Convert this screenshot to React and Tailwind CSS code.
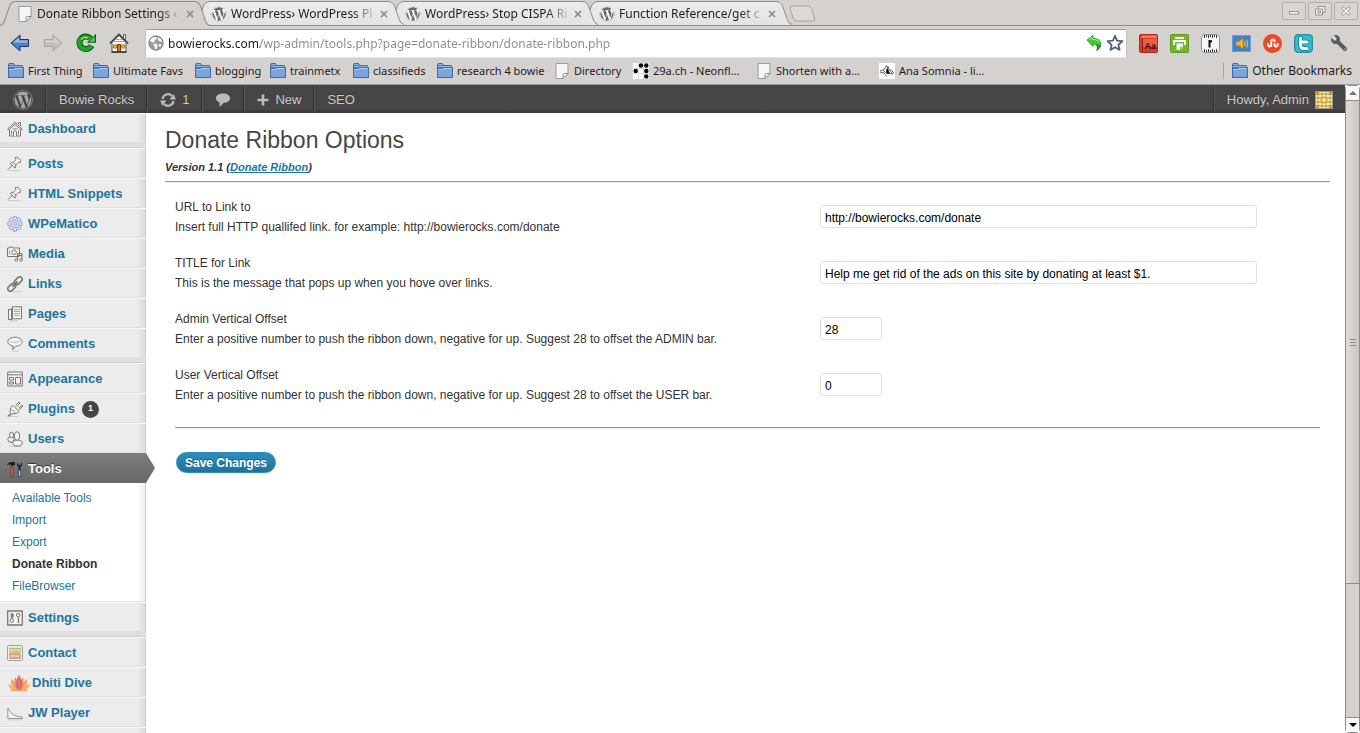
import React from "react";
import { FaWordpress, FaStumbleupon, FaWrench } from "react-icons/fa";

/* ---------- small drawings ---------- */

const PageIcon = () => (
  <svg viewBox="0 0 16 16" className="size-4 shrink-0">
    <path d="M2 .5h12v10l-5 5H2z" fill="#f6f6f6" stroke="#9b9b9b" />
    <path d="M14 10.500l-5 5v-3.500q0-1.500 1.500-1.500z" fill="#fff" stroke="#8a8a8a" />
  </svg>
);

const FolderIcon = () => (
  <svg viewBox="0 0 16 16" className="size-4 shrink-0">
    <path d="M.5 14.500v-13q0-1 1-1h4l1.500 2h7.500v2h1v10z" fill="#4f82bf" stroke="#3f6da6" />
    <path d="M1 3.500h13.500M1.500 1.500h4" stroke="#8fb4e0" />
    <path d="M.5 5.500h4.500l1.500-1h9v10H.5z" fill="#7ba5da" stroke="#3f6da6" />
    <path d="M1.500 6.500h4l1.500-1h7.500" fill="none" stroke="#b3cef0" />
  </svg>
);

const DotsIcon = () => (
  <svg viewBox="0 0 16 16" className="size-4 shrink-0">
    <rect width="16" height="16" fill="#fff" />
    <path d="M5.500 0v16M10.500 0v16M0 5.500h16M0 10.500h16" stroke="#ddd" />
    <circle cx="8" cy="2.500" r="2.200" />
    <circle cx="13.300" cy="2.500" r="2.200" />
    <circle cx="2.700" cy="8" r="2.200" />
    <circle cx="13.300" cy="8" r="2.200" />
    <circle cx="13.300" cy="13.400" r="2.200" />
  </svg>
);

const SketchIcon = () => (
  <svg viewBox="0 0 16 16" className="size-4 shrink-0">
    <rect width="16" height="16" fill="#fff" />
    <path d="M1 8l4-1.500 2.500-4L10 6l2.500 1.500L15 10M1 9l4 1 3 3.500M4 7.500l4 3M9 3v8M10.500 7l3.500 4-4-.5" fill="none" stroke="#444" strokeWidth=".8" />
    <path d="M8 4.500l3 6-3 .5-1-3z" fill="#111" />
  </svg>
);

const BackIcon = () => (
  <svg viewBox="0 0 20 18" className="h-[18px] w-5">
    <path d="M1 9l9-8v4.500h8.500v7H10V17z" fill="#4f7fc4" stroke="#1d3668" strokeLinejoin="round" />
    <path d="M3 8.500l6-5v3h8.500v2z" fill="#9dbde6" />
  </svg>
);

const ForwardIcon = () => (
  <svg viewBox="0 0 20 18" className="h-[18px] w-5">
    <path d="M19 9l-9-8v4.500H1.500v7H10V17z" fill="#c2c0bd" stroke="#a6a3a0" strokeLinejoin="round" />
    <path d="M17 8.500l-6-5v3H2.500v2z" fill="#d3d1ce" />
  </svg>
);

const ReloadIcon = () => (
  <svg viewBox="0 0 20 20" className="size-5">
    <path d="M15.500 12.500a6.300 6.300 0 1 1-1-7" fill="none" stroke="#0b5a10" strokeWidth="6" />
    <path d="M20 .8v9h-9.200z" fill="#0b5a10" />
    <path d="M15.300 12.700a6.300 6.300 0 1 1-1-7" fill="none" stroke="#20a32a" strokeWidth="4" />
    <path d="M18.900 3v5.800h-6z" fill="#4cc94f" />
    <path d="M5 6.500a6.300 6.300 0 0 1 7-1.800" fill="none" stroke="#8be08b" strokeWidth="1.500" />
  </svg>
);

const HomeIcon = () => (
  <svg viewBox="0 0 20 20" className="size-5">
    <path d="M14.500 1.500h2v5h-2z" fill="#eee" stroke="#444" strokeWidth=".8" />
    <path d="M3 9.500l7-7 7 7v9.500H3z" fill="#fbfaf6" stroke="#5a5145" />
    <path d="M.8 10.500L10 1.300l9.200 9.200" fill="none" stroke="#3a3a3a" strokeWidth="1.500" />
    <path d="M4.500 8.500h11M6.500 6.500h7" stroke="#aaa" />
    <path d="M8.500 11.500h3V19h-3z" fill="#d97a1c" stroke="#6d3b0c" />
    <path d="M4.500 12h3v3h-3zM12.800 12h3v3h-3z" fill="#f4cf5e" stroke="#b0721c" />
    <path d="M2.500 19h15" stroke="#333" strokeWidth="1.500" />
  </svg>
);

const GlobeIcon = () => (
  <svg viewBox="0 0 16 16" className="size-4 shrink-0">
    <circle cx="8" cy="8" r="7.200" fill="#9a9a9a" stroke="#808080" />
    <path d="M3 3.500q2.500-2 5-1.800L9 4 6.500 5 7 7l-2.500.5L2 6q0-1.500 1-2.500zM9.500 2l3.500 2 1 3-2.500-.5L10 5zM5 9l3-.5L10 10l-1.500 4-1.500.3-.5-2.800zM11 9l2.500.3-1 2.700-1.500-.5z" fill="#f4f4f4" />
  </svg>
);

const UndoIcon = () => (
  <svg viewBox="0 0 16 16" className="size-4 shrink-0">
    <path d="M1 5l6-4.500v3c6-.5 8.500 3.500 7.500 7.500-.5 2-2 4-4 4.500 2-3.500.5-6.500-3.500-6.500v2.500z" fill="#3fc92f" stroke="#1f8a1a" strokeWidth=".8" strokeLinejoin="round" />
    <path d="M8 9q4 .5 3 6 3-1.500 3.500-5" fill="#23702a" opacity=".7" />
    <path d="M3 4.800L6.200 2.300v2c4 0 6 1 7 3.200" fill="none" stroke="#a4f094" />
  </svg>
);

const StarIcon = () => (
  <svg viewBox="0 0 18 18" className="size-[18px] shrink-0">
    <path d="M9 1.800l2.100 4.900 5.300.5-4 3.500 1.200 5.200L9 13.200l-4.600 2.700 1.200-5.200-4-3.500 5.300-.5z" fill="#fff" stroke="#566079" strokeWidth="1.800" strokeLinejoin="round" />
  </svg>
);

const DictionaryIcon = () => (
  <svg viewBox="0 0 19 19" className="size-[19px]">
    <rect x=".5" y=".5" width="18" height="18" rx="1.500" fill="#d6402f" stroke="#b02a1c" />
    <path d="M2 4h16V1.500H3.500z" fill="#f47a62" />
    <path d="M4 5h14v13H4z" fill="#e8604b" />
    <path d="M3.500 4.500V18" stroke="#8f1a10" />
    <path d="M4 13h14v5H4z" fill="#d23d2d" />
    <text x="5.500" y="14.500" fontSize="9" fontWeight="700" fill="#3d0a06" fontFamily="Liberation Sans, sans-serif">Aa</text>
  </svg>
);

const PrintIcon = () => (
  <svg viewBox="0 0 19 19" className="size-[19px]">
    <rect x=".5" y=".5" width="18" height="18" rx="1" fill="#73b52c" stroke="#5e9b1d" />
    <path d="M5 4h9M4 11V7h11v4" fill="none" stroke="#fff" strokeWidth="1.800" />
    <path d="M6.500 9.500h6.500V13L10.500 16h-4z" fill="#fff" />
    <path d="M10.500 16v-3H13" fill="none" stroke="#73b52c" />
  </svg>
);

const RulerIcon = () => (
  <svg viewBox="0 0 19 19" className="size-[19px]">
    <rect x=".5" y=".5" width="18" height="18" rx="3" fill="#f5f7f9" stroke="#8d9298" />
    <path d="M3.500 1v3M5.500 1v2M7.500 1v3M9.500 1v2M11.500 1v3M13.500 1v2M15.500 1v3M3.500 15v3M5.500 16v2M7.500 15v3M9.500 16v2M11.500 15v3M13.500 16v2M15.500 15v3" stroke="#333" />
    <path d="M8.500 6v7.500M8.500 8.500q.5-1.500 2.500-1.300" fill="none" stroke="#111" strokeWidth="2" />
  </svg>
);

const SpeakerIcon = () => (
  <svg viewBox="0 0 19 19" className="size-[19px]">
    <rect x=".5" y="1.500" width="18" height="16" fill="#3f82c9" stroke="#6d9fd4" />
    <path d="M4 7.500h3L11 4v11l-4-3.500H4z" fill="#f8b334" stroke="#c98310" strokeWidth=".6" />
    <path d="M12.500 7q1.500 2.500 0 5M14.500 5.500q2.300 4 0 8" fill="none" stroke="#f8b334" strokeWidth="1.200" />
  </svg>
);

const StumbleIcon = () => (
  <span className="flex size-[19px] items-center justify-center rounded-full bg-[#ec4823]">
    <FaStumbleupon className="size-3 text-white" />
  </span>
);

const TwitterIcon = () => (
  <svg viewBox="0 0 19 19" className="size-[19px]">
    <rect x=".7" y=".7" width="17.600" height="17.600" rx="3.500" fill="#35bccb" stroke="#2b8f9b" strokeWidth="1.400" />
    <path d="M6.500 4.500v6.500q0 3.500 3.500 3.500h3M6.500 8H13" fill="none" stroke="#0f7f90" strokeWidth="4.600" strokeLinecap="round" />
    <path d="M6.500 4.500v6.500q0 3.500 3.500 3.500h3M6.500 8H13" fill="none" stroke="#fff" strokeWidth="3" strokeLinecap="round" />
  </svg>
);

const UpdateIcon = () => (
  <svg viewBox="0 0 16 16" className="size-4">
    <path d="M2.500 7a5.500 5.500 0 0 1 9.500-3M13.500 9a5.500 5.500 0 0 1-9.500 3" fill="none" stroke="#bbb" strokeWidth="2.200" />
    <path d="M9.500 7.500h6.300L13.800 2zM6.500 8.500H.2L2.200 14z" fill="#bbb" />
  </svg>
);

const BubbleIcon = () => (
  <svg viewBox="0 0 16 16" className="size-4">
    <path d="M8 1.500c4 0 7 2 7 4.700s-3 4.700-6.500 4.700L4.500 15v-4.700C2.300 9.500 1 8 1 6.200c0-2.700 3-4.700 7-4.700z" fill="#bbb" />
  </svg>
);

const PlusIcon = () => (
  <svg viewBox="0 0 12 12" className="size-3">
    <path d="M6 .5v11M.5 6h11" stroke="#bbb" strokeWidth="2.600" />
  </svg>
);

const AvatarIcon = () => (
  <svg viewBox="0 0 18 18" className="size-[18px]">
    <rect width="18" height="18" fill="#fff" stroke="#999" strokeWidth="2" />
    <path d="M3 1v16M7 1v16M11 1v16M15 1v16M1 3h16M1 7h16M1 11h16M1 15h16" stroke="#d6a21e" strokeWidth="1.300" />
    <path d="M1 1h3v3H1zM14 1h3v3h-3zM1 14h3v3H1zM14 14h3v3h-3z" fill="#cf9a14" />
    <path d="M9 5.500L12.500 9 9 12.500 5.500 9z" fill="#f3dfa2" stroke="#c48f10" />
  </svg>
);

function MenuGlyph({ children }) {
  return (
    <svg viewBox="0 0 16 16" className="size-4" fill="#f4f4f4" stroke="#777" strokeLinejoin="round">
      {children}
    </svg>
  );
}

const Pin = () => (
  <MenuGlyph>
    <path d="M1 14.500h13" stroke="#ccc" />
    <path d="M1 13.500L5.500 9" />
    <path d="M8 1.800q1.500-1.500 4 .6t1.500 4l-1.800-.3-3 3q.5 2-.7 3L3.200 7.200q1-1.200 3-.7l2.800-3z" />
    <path d="M6.500 7l2.500 2" />
  </MenuGlyph>
);

const menuIcons = {
  home: (
    <MenuGlyph>
      <path d="M2.500 7.500v7.500h11V7.500" />
      <path d="M.6 8L8 1.200 15.400 8l-1 1L8 3.300 1.600 9z" />
      <path d="M11.500 3V1.500h2V5M6.500 15v-4.500q1.500-1.500 3 0V15M4.500 9.500v4M11.500 9.500v4M5.500 8h5" />
    </MenuGlyph>
  ),
  pin: <Pin />,
  gear: (
    <MenuGlyph>
      <g stroke="#96a6cf" fill="#d6def2">
        <path d="M6.500.7h3l.4 1.800 1.700-1 2.300 2.200-1 1.800 2 .6v3.300l-2 .5 1 1.900-2.200 2.200-1.800-1-.5 2.200H6.500L6 13l-1.800 1L2 11.800l1-1.900-2.200-.5V6.100l2.200-.6-1-1.800L4.300 1.500l1.800 1z" />
        <circle cx="8" cy="8" r="4" fill="#eef2fb" />
        <circle cx="8" cy="8" r="1.800" />
      </g>
    </MenuGlyph>
  ),
  media: (
    <MenuGlyph>
      <path d="M.5 2h2V1h3v1h7v8.500H.5z" />
      <path d="M2.500 4v5" stroke="#aaa" />
      <circle cx="7" cy="6.200" r="2.300" />
      <path d="M10.500 14V7.500h4.500V14M10.500 9.500h4.500" fill="none" />
      <circle cx="9.300" cy="14" r="1.300" />
      <circle cx="14" cy="14" r="1.300" />
    </MenuGlyph>
  ),
  link: (
    <MenuGlyph>
      <path d="M2 15.500h13" stroke="#ccc" />
      <g fill="none">
        <rect x="6.800" y="2.200" width="9" height="5" rx="2.500" transform="rotate(-45 11.300 4.700)" strokeWidth="1.600" />
        <rect x=".2" y="8.800" width="9" height="5" rx="2.500" transform="rotate(-45 4.700 11.300)" strokeWidth="1.600" />
        <path d="M5.500 10.500l5-5" strokeWidth="2" />
      </g>
    </MenuGlyph>
  ),
  pages: (
    <MenuGlyph>
      <path d="M1.500 3.500H5v10H1.500zM4.500 14.500v-12h4" />
      <path d="M5.500.8h9v12h-9z" />
      <path d="M7 3.500h6M7 5.500h6M7 7.500h6M7 9.500h6" stroke="#aaa" />
      <path d="M2 15h9" stroke="#ccc" />
    </MenuGlyph>
  ),
  comments: (
    <MenuGlyph>
      <path d="M4 15h8" stroke="#ccc" />
      <path d="M8 1.200c4 0 7.200 2 7.200 4.500S12.500 10 9 10.200L5.500 13.500l.8-3.500C3 9.500.8 8 .8 5.700.8 3.200 4 1.200 8 1.200z" />
      <path d="M3 5q5 3 10 0" stroke="#d5d5d5" fill="none" strokeWidth="2" />
    </MenuGlyph>
  ),
  appearance: (
    <MenuGlyph>
      <path d="M.7 1h14.600v14H.7z" />
      <path d="M.7 3.800h14.600M2.500 6.500h4v2.500h-4zM2.500 11h4v2h-4zM8.500 6.500h5v6.500h-5z" />
    </MenuGlyph>
  ),
  plugins: (
    <MenuGlyph>
      <path d="M1 15.500h10" stroke="#ccc" />
      <path d="M.8 14.800q2.200.2 3.200-2.300" fill="none" strokeWidth="1.600" />
      <path d="M6 4.500l6 6q-2 2.500-5 2.200L4.500 13 3 11.500l.3-2.500Q3 6.500 6 4.500z" />
      <path d="M8.500 4.500L12 1l1 1-3.300 3.700M11.500 7.500L15 4l.8 1-3.500 3.800M5 8.500l3 3" />
    </MenuGlyph>
  ),
  users: (
    <MenuGlyph>
      <path d="M2 15.500h13" stroke="#ccc" />
      <ellipse cx="4" cy="8.500" rx="3.200" ry="2.800" />
      <ellipse cx="4.500" cy="4" rx="2" ry="2.800" />
      <ellipse cx="10.500" cy="12" rx="5" ry="3" />
      <ellipse cx="10" cy="5" rx="2.500" ry="4.200" />
    </MenuGlyph>
  ),
  tools: (
    <svg viewBox="0 0 16 16" className="size-4">
      <path d="M0 4.500Q1.500 1 4 1h4v3H6V5H4V3.500Q2 3 0 4.500z" fill="#1f1f1f" />
      <path d="M4 5h2v10.500H4z" fill="#d98a5a" stroke="#5a2f14" strokeWidth=".8" />
      <path d="M10 1.500v3L11.500 6v3h2V6L15 4.500v-3l-1.300 1.300V4h-2.400V2.800z" fill="#222" />
      <path d="M11.300 9h2.600v6.500h-2.600z" fill="#9fc4ea" stroke="#335" strokeWidth=".8" />
    </svg>
  ),
  settings: (
    <MenuGlyph>
      <path d="M.7 1h14.600v14H.7z" strokeWidth="1.300" />
      <path d="M4.500 3v5.500M11.500 7.500V13M6 3.500v4" fill="none" strokeWidth="1.400" />
      <circle cx="4.800" cy="10.500" r="1.800" />
      <circle cx="11.200" cy="5" r="1.800" />
    </MenuGlyph>
  ),
  contact: (
    <MenuGlyph>
      <rect x=".6" y=".6" width="14.800" height="14.800" rx="1" stroke="#999" />
      <path d="M3 3.500h10v3.500H3z" fill="#fff" stroke="#b4bb56" strokeWidth="1.300" />
      <path d="M3 9h10v4H3z" fill="#fbe9e3" stroke="#d9826b" strokeWidth="1.300" />
      <path d="M5 5.200h6M5 11h6" stroke="#aaa" />
    </MenuGlyph>
  ),
  lotus: (
    <svg viewBox="0 0 24 18" className="h-[18px] w-6 shrink-0">
      <path d="M1 10q4 0 8 6.500-6 1-8-6.500zM23 10q-4 0-8 6.500 6 1 8-6.500z" fill="#f4b56a" />
      <path d="M4 5q5 2 6 11.500Q3 13 4 5zM20 5q-5 2-6 11.500Q21 13 20 5z" fill="#f0a95e" />
      <path d="M8 3q4 4 3 13.500Q6 12 8 3zM16 3q-4 4-3 13.500Q18 12 16 3z" fill="#e98f6c" />
      <path d="M12 1q4.500 6 2 15.500h-4Q7.500 7 12 1z" fill="#d9666c" />
      <path d="M12 1v15.500" stroke="#e98a88" />
      <path d="M4 16.500h16" stroke="#eeaa5c" strokeWidth="1.500" />
    </svg>
  ),
  jw: (
    <MenuGlyph>
      <path d="M.8 3v10.500h14.500V12Q5 12 .8 3z" fill="#f1f1f1" stroke="#999" />
      <path d="M1 14.800h14.500" stroke="#ccc" />
    </MenuGlyph>
  ),
};

/* ---------- browser frame ---------- */

function Tab({ title, active, icon, order }) {
  const fill = active ? "#d5d1ce" : "#e9e7e5";
  return (
    <div
      className={
        "relative -mr-4 flex w-[210px] items-stretch " +
        (active ? "-mb-px h-[25px] " : "h-6 ") +
        order
      }
    >
      <svg viewBox="0 0 16 24" preserveAspectRatio="none" className="h-full w-4 shrink-0">
        <path d="M0 24Q3 23 4.500 19L9.500 5Q11 .5 16 .5V24z" fill={fill} />
        <path d="M0 23.500Q3 23 4.500 19L9.500 5Q11 .5 16 .5" fill="none" stroke="#8f8c89" />
      </svg>
      <div
        className={
          "flex min-w-0 flex-1 items-center border-t border-[#8f8c89] pl-px " +
          (active ? "bg-[#d5d1ce]" : "bg-linear-to-b from-[#efedec] to-[#e4e2e0]")
        }
      >
        {icon}
        <a
          href="#"
          className="ml-1 min-w-0 flex-1 whitespace-nowrap text-[#1c1c1c] [mask-image:linear-gradient(to_right,black_82%,transparent)]"
        >
          {title}
        </a>
        <button type="button" aria-label={"Close " + title} className="ml-0.5 flex h-4 w-2 items-center justify-center">
          <svg viewBox="0 0 8 8" className="size-2">
            <path d="M1 1l6 6M7 1L1 7" stroke="#8c8986" strokeWidth="1.600" />
          </svg>
        </button>
      </div>
      <svg viewBox="0 0 16 24" preserveAspectRatio="none" className="h-full w-4 shrink-0">
        <path d="M16 24Q13 23 11.500 19L6.500 5Q5 .5 0 .5V24z" fill={fill} />
        <path d="M16 23.500Q13 23 11.500 19L6.500 5Q5 .5 0 .5" fill="none" stroke="#8f8c89" />
      </svg>
    </div>
  );
}

const WpFavicon = () => <FaWordpress className="size-4 shrink-0 rounded-full bg-white text-[#6a6a6a]" />;

function WindowButton({ label, children }) {
  return (
    <button
      type="button"
      aria-label={label}
      className="flex h-[18px] w-6 items-center justify-center rounded-xs border border-[#b3afab] bg-[#d8d5d2]"
    >
      <svg viewBox="0 0 12 12" className="size-3" fill="none" stroke="#96928e">
        {children}
      </svg>
    </button>
  );
}

function TabStrip() {
  return (
    <div className="flex h-[26px] shrink-0 items-end justify-between border-b border-[#8f8c89] bg-[#d5d1ce]">
      <div className="flex items-end">
        <Tab active order="z-40" icon={<PageIcon />} title="Donate Ribbon Settings ‹" />
        <Tab order="z-30" icon={<WpFavicon />} title="WordPress› WordPress Pl" />
        <Tab order="z-20" icon={<WpFavicon />} title="WordPress› Stop CISPA Ri" />
        <Tab order="z-10" icon={<WpFavicon />} title="Function Reference/get c" />
        <button type="button" aria-label="New tab" className="mb-[3px] ml-3">
          <svg viewBox="0 0 28 17" className="h-[17px] w-7">
            <path d="M4 1h16q2.500 0 3.500 2.500L26.500 13q.8 3-2 3H9q-2.500 0-3.500-2.500L2 4Q1 1 4 1z" fill="#dcd9d7" stroke="#a5a19e" />
          </svg>
        </button>
      </div>
      <div className="mr-0.5 mb-[5px] flex gap-0.5">
        <WindowButton label="Minimize">
          <rect x="1.500" y="6.500" width="9" height="2.500" fill="#fff" />
        </WindowButton>
        <WindowButton label="Restore">
          <path d="M4 1.500h7v6H8.500V10h-7V4H4zM4 4h4.500v3.500M4 6h2.500v2H4z" fill="#eee" />
        </WindowButton>
        <WindowButton label="Close window">
          <path d="M1.500 3L3 1.500l3 3 3-3L10.500 3l-3 3 3 3L9 10.500l-3-3-3 3L1.500 9l3-3z" fill="#fff" />
        </WindowButton>
      </div>
    </div>
  );
}

function Toolbar() {
  const extensions = [
    ["Dictionary", <DictionaryIcon />],
    ["Print", <PrintIcon />],
    ["Ruler", <RulerIcon />],
    ["Speak", <SpeakerIcon />],
    ["StumbleUpon", <StumbleIcon />],
    ["Twitter", <TwitterIcon />],
  ];
  return (
    <div className="flex h-[34px] shrink-0 items-center bg-[#d5d1ce] pr-[13px] pl-2.5">
      <div className="flex w-[136px] shrink-0 items-center gap-[13px]">
        <button type="button" aria-label="Back"><BackIcon /></button>
        <button type="button" aria-label="Forward"><ForwardIcon /></button>
        <button type="button" aria-label="Reload"><ReloadIcon /></button>
        <button type="button" aria-label="Home"><HomeIcon /></button>
      </div>
      <div className="-ml-px flex h-[29px] min-w-0 flex-1 items-center gap-1 rounded-xs border border-t-[#a09c99] border-r-[#c5c1be] border-b-[#e4e2e0] border-l-[#c5c1be] bg-white px-0.5">
        <GlobeIcon />
        <input
          type="text"
          aria-label="Address"
          defaultValue="bowierocks.com/wp-admin/tools.php?page=donate-ribbon/donate-ribbon.php"
          className="min-w-0 flex-1 bg-[linear-gradient(90deg,#1c1c1c_92px,#8a8a8a_92px)] bg-clip-text pt-0.5 font-['Noto_Sans',sans-serif] text-xs text-transparent outline-none"
        />
        <button type="button" aria-label="Undo"><UndoIcon /></button>
        <button type="button" aria-label="Bookmark this page"><StarIcon /></button>
      </div>
      <div className="ml-3 flex shrink-0 items-center gap-3">
        {extensions.map(([label, icon]) => (
          <button key={label} type="button" aria-label={label} className="flex">{icon}</button>
        ))}
        <button type="button" aria-label="Browser menu" className="ml-1.5 flex">
          <FaWrench className="size-4 -scale-x-100 text-[#5a5a5a]" />
        </button>
      </div>
    </div>
  );
}

function BookmarksBar() {
  const items = [
    ["First Thing", <FolderIcon />, "w-[85px]"],
    ["Ultimate Favs", <FolderIcon />, "w-[102px]"],
    ["blogging", <FolderIcon />, "w-[75px]"],
    ["trainmetx", <FolderIcon />, "w-[83px]"],
    ["classifieds", <FolderIcon />, "w-[84px]"],
    ["research 4 bowie", <FolderIcon />, "w-[117px]"],
    ["Directory", <PageIcon />, "w-[79px]"],
    ["29a.ch - Neonfl…", <DotsIcon />, "w-[123px]"],
    ["Shorten with a…", <PageIcon />, "w-[123px]"],
    ["Ana Somnia - li…", <SketchIcon />, "w-[123px]"],
  ];
  return (
    <nav aria-label="Bookmarks" className="flex h-[25px] shrink-0 items-center justify-between border-b border-[#9e9a97] bg-[#d5d1ce] px-2 pb-0.5 text-[11px] text-[#1c1c1c]">
      <div className="flex">
        {items.map(([label, icon, width]) => (
          <a key={label} href="#" className={"flex items-center gap-1 whitespace-nowrap " + width}>
            {icon}
            {label}
          </a>
        ))}
      </div>
      <a href="#" className="flex items-center gap-1 border-l border-[#aaa6a3] pl-2 text-xs whitespace-nowrap">
        <FolderIcon />
        Other Bookmarks
      </a>
    </nav>
  );
}

function Scrollbar() {
  return (
    <div className="flex w-[15px] shrink-0 flex-col rounded-sm border border-[#8f8c89] bg-[#d5d1ce]">
      <button type="button" aria-label="Scroll up" className="flex h-[15px] items-center justify-center border-b border-[#8f8c89] bg-[#faf8f6]">
        <svg viewBox="0 0 8 4" className="h-1 w-2"><path d="M0 4l4-4 4 4z" fill="#777" /></svg>
      </button>
      <div className="flex flex-[484] flex-col items-center justify-center gap-0.5 border-b border-[#8f8c89] bg-linear-to-r from-[#dedbd8] to-[#cbc7c4]">
        <span className="h-px w-1.5 bg-[#8f8c89]" />
        <span className="h-px w-1.5 bg-[#8f8c89]" />
        <span className="h-px w-1.5 bg-[#8f8c89]" />
      </div>
      <div className="flex-[133]" />
      <button type="button" aria-label="Scroll down" className="flex h-[15px] items-center justify-center border-t border-[#8f8c89] bg-[#faf8f6]">
        <svg viewBox="0 0 8 4" className="h-1 w-2"><path d="M0 0l4 4 4-4z" /></svg>
      </button>
    </div>
  );
}

/* ---------- WordPress admin ---------- */

function BarItem({ className, children, label }) {
  return (
    <a
      href="#"
      aria-label={label}
      className={"mr-px flex h-full items-center border-r border-[#333] pt-0.5 shadow-[1px_0_0_#555] [text-shadow:0_-1px_0_#333] " + className}
    >
      {children}
    </a>
  );
}

function AdminBar() {
  return (
    <div className="flex h-7 shrink-0 items-center justify-between bg-linear-to-b from-[#464646] from-85% to-[#373737] text-[13px] text-[#ccc]">
      <div className="flex h-full">
        <BarItem label="About WordPress" className="w-[46px] justify-center">
          <FaWordpress className="size-5 text-[#aaa]" />
        </BarItem>
        <BarItem className="px-3">Bowie Rocks</BarItem>
        <BarItem className="gap-1.5 px-3">
          <UpdateIcon />1
        </BarItem>
        <BarItem label="Comments" className="px-3">
          <BubbleIcon />
        </BarItem>
        <BarItem className="gap-1.5 px-3">
          <PlusIcon />
          New
        </BarItem>
        <a href="#" className="flex h-full items-center px-3 pt-0.5 [text-shadow:0_-1px_0_#333]">SEO</a>
      </div>
      <a href="#" className="flex h-full items-center gap-1.5 border-l border-[#555] px-3 pt-0.5 shadow-[-1px_0_0_#333] [text-shadow:0_-1px_0_#333]">
        Howdy, Admin
        <AvatarIcon />
      </a>
    </div>
  );
}

function MenuItem({ icon, label, badge, current }) {
  const wide = icon === "lotus";
  return (
    <li
      className={
        "relative h-[30px] border-t border-b " +
        (current
          ? "border-t-[#808080] border-b-[#6d6d6d] bg-linear-to-b from-[#7d7d7d] to-[#686868]"
          : "border-t-[#f9f9f9] border-b-[#dfdfdf]")
      }
    >
      <a
        href="#"
        className={
          "flex h-full items-center gap-[5px] pt-0.5 pl-[7px] text-[13px] font-bold " +
          (current ? "text-white [text-shadow:0_-1px_0_#333]" : "text-[#21759b]")
        }
      >
        <span className={wide ? "flex w-5" : "flex w-4"}>{menuIcons[icon]}</span>
        {label}
        {badge && (
          <span className="ml-0.5 flex size-[17px] items-center justify-center rounded-full bg-[#464646] text-[9px] text-white">
            {badge}
          </span>
        )}
      </a>
      {current && (
        <svg viewBox="0 0 9 30" className="absolute -top-px left-full h-[30px] w-[9px]">
          <defs>
            <linearGradient id="arrow" x1="0" y1="0" x2="0" y2="1">
              <stop offset="0" stopColor="#7d7d7d" />
              <stop offset="1" stopColor="#686868" />
            </linearGradient>
          </defs>
          <path d="M0 0l9 15-9 15z" fill="url(#arrow)" />
        </svg>
      )}
    </li>
  );
}

const Separator = () => <li aria-hidden="true" className="h-[5px] border-b border-[#cfcfcf] bg-[#dfdfdf]" />;

function Sidebar() {
  const submenu = ["Available Tools", "Import", "Export", "Donate Ribbon", "FileBrowser"];
  return (
    <nav aria-label="Admin menu" className="z-10 w-[146px] shrink-0 border-r border-[#ccc] bg-linear-to-r from-[#ececec] from-94% to-[#dedede]">
      <ul className="-mr-px">
        <MenuItem icon="home" label="Dashboard" />
        <Separator />
        <MenuItem icon="pin" label="Posts" />
        <MenuItem icon="pin" label="HTML Snippets" />
        <MenuItem icon="gear" label="WPeMatico" />
        <MenuItem icon="media" label="Media" />
        <MenuItem icon="link" label="Links" />
        <MenuItem icon="pages" label="Pages" />
        <MenuItem icon="comments" label="Comments" />
        <Separator />
        <MenuItem icon="appearance" label="Appearance" />
        <MenuItem icon="plugins" label="Plugins" badge="1" />
        <MenuItem icon="users" label="Users" />
        <MenuItem icon="tools" label="Tools" current />
        <li className="mr-px border-b border-[#dfdfdf] bg-linear-to-r from-white from-94% to-[#eee] py-1">
          <ul>
            {submenu.map((name) => (
              <li key={name}>
                <a
                  href="#"
                  className={
                    "block pl-3 text-xs leading-[22px] " +
                    (name === "Donate Ribbon" ? "font-bold text-[#333]" : "text-[#21759b]")
                  }
                >
                  {name}
                </a>
              </li>
            ))}
          </ul>
        </li>
        <MenuItem icon="settings" label="Settings" />
        <Separator />
        <MenuItem icon="contact" label="Contact" />
        <MenuItem icon="lotus" label="Dhiti Dive" />
        <MenuItem icon="jw" label="JW Player" />
        <li className="h-[30px] border-t border-[#f9f9f9]" />
      </ul>
    </nav>
  );
}

function Field({ id, label, hint, value, short }) {
  return (
    <div className="grid grid-cols-[645fr_500fr] items-center">
      <div className="leading-5">
        <label htmlFor={id} className="block">{label}</label>
        <p>{hint}</p>
      </div>
      <input
        id={id}
        type="text"
        defaultValue={value}
        className={
          "mb-px h-[23px] rounded-[3px] border border-[#dfdfdf] bg-white px-1 pt-0.5 text-black " +
          (short ? "w-[62px]" : "w-[437px] max-w-full")
        }
      />
    </div>
  );
}

function OptionsPage() {
  return (
    <main className="min-w-0 flex-1 bg-white pr-[15px] pl-[19px] text-xs text-[#333]">
      <h1 className="pt-[11px] pb-px text-[23px] leading-8 text-[#464646]">Donate Ribbon Options</h1>
      <p className="text-[11px] leading-5 font-bold italic">
        Version 1.1 (<a href="#" className="text-[#21759b] underline">Donate Ribbon</a>)
      </p>
      <hr className="mt-1 h-0.5 border-t border-b border-t-[#9a9a9a] border-b-[#eee]" />
      <form className="px-2.5 pt-3.5" onSubmit={(e) => e.preventDefault()}>
        <div className="flex flex-col gap-4">
          <Field
            id="url"
            label="URL to Link to"
            hint="Insert full HTTP quallifed link. for example: http://bowierocks.com/donate"
            value="http://bowierocks.com/donate"
          />
          <Field
            id="title"
            label="TITLE for Link"
            hint="This is the message that pops up when you hove over links."
            value="Help me get rid of the ads on this site by donating at least $1."
          />
          <Field
            id="admin-offset"
            label="Admin Vertical Offset"
            hint="Enter a positive number to push the ribbon down, negative for up. Suggest 28 to offset the ADMIN bar."
            value="28"
            short
          />
          <Field
            id="user-offset"
            label="User Vertical Offset"
            hint="Enter a positive number to push the ribbon down, negative for up. Suggest 28 to offset the USER bar."
            value="0"
            short
          />
        </div>
        <hr className="mt-[22px] h-0.5 border-t border-b border-t-[#9a9a9a] border-b-[#eee]" />
        <button
          type="submit"
          className="mt-[23px] ml-px flex h-[21px] items-center rounded-full border border-[#298cba] bg-linear-to-b from-[#2a8fbf] to-[#21729a] px-2 text-xs font-bold text-white [text-shadow:0_-1px_0_rgba(0,0,0,0.3)]"
        >
          Save Changes
        </button>
      </form>
    </main>
  );
}

export default function App() {
  return (
    <div className="flex h-screen flex-col overflow-hidden font-['Liberation_Sans',Arial,sans-serif]">
      <header className="flex shrink-0 flex-col font-['Noto_Sans',sans-serif] text-xs">
        <TabStrip />
        <Toolbar />
        <BookmarksBar />
      </header>
      <div className="flex min-h-0 flex-1">
        <div className="flex min-w-0 flex-1 flex-col">
          <AdminBar />
          <div className="flex min-h-0 flex-1">
            <Sidebar />
            <OptionsPage />
          </div>
        </div>
        <Scrollbar />
      </div>
    </div>
  );
}
